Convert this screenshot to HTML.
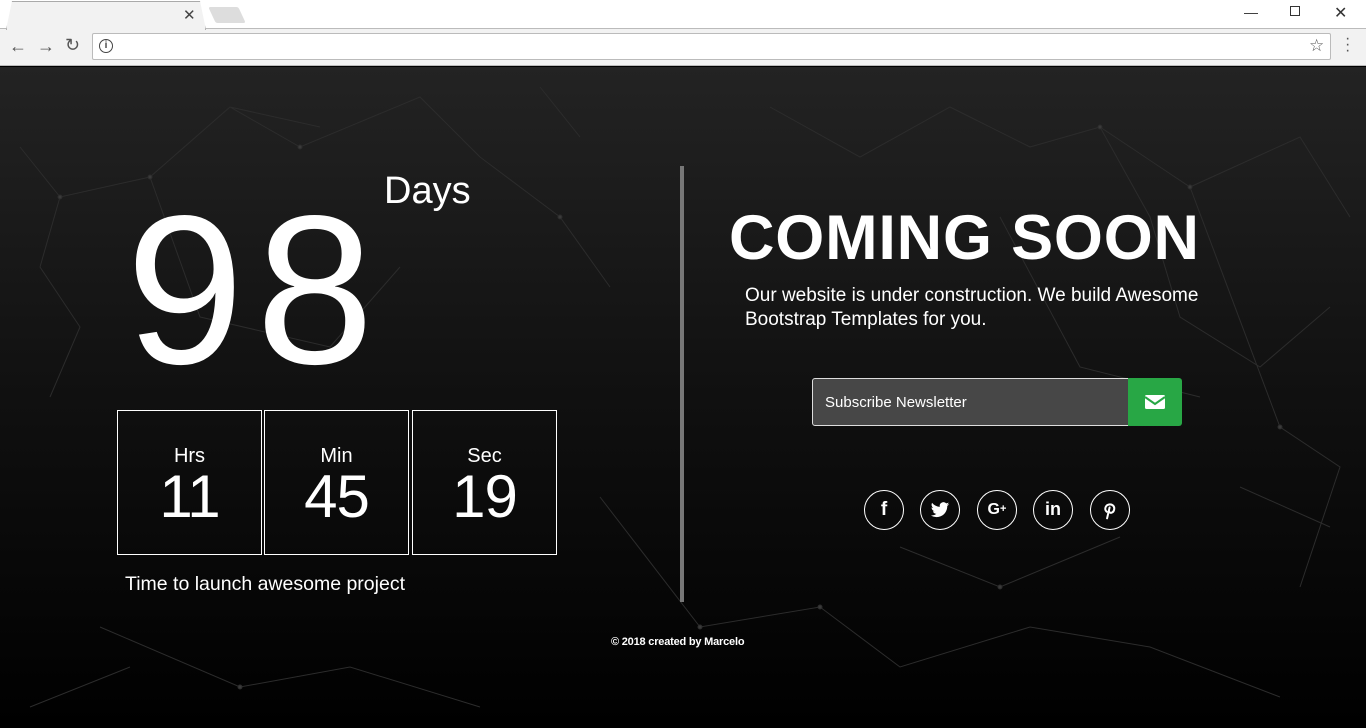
<!DOCTYPE html>
<html><head><meta charset="utf-8"><style>
*{margin:0;padding:0;box-sizing:border-box}
body{width:1366px;height:728px;overflow:hidden;font-family:"Liberation Sans",sans-serif;background:#000;position:relative}
.chrome{position:absolute;left:0;top:0;width:1366px;height:66px;background:#f2f2f2;border-bottom:1px solid #bbb}
.tabbar{position:absolute;top:0;left:0;width:1366px;height:29px;background:#fff;border-bottom:1px solid #bbb}
.tab{position:absolute;left:6px;top:1px;width:200px;height:29px;background:#f2f2f2;border:1px solid #aaa;border-bottom:none;clip-path:polygon(3% 0,97% 0,100% 100%,0 100%);}
.url{position:absolute;left:92px;top:33px;width:1239px;height:27px;background:#fff;border:1px solid #bbb;border-radius:2px}
.page{position:absolute;left:0;top:67px;width:1366px;height:661px;background:linear-gradient(#232323,#101010 50%,#000)}
.w{color:#fff;position:absolute;white-space:nowrap}
.box{position:absolute;top:410px;width:145px;height:145px;border:1px solid #fff;color:#fff;text-align:center}
.box .l{font-size:20px;margin-top:34px;line-height:22px}
.box .n{font-size:60px;line-height:60px;letter-spacing:-1px}
.soc{position:absolute;top:490px;width:40px;height:40px;border:1.5px solid #fff;border-radius:50%;color:#fff;font-weight:bold;font-size:19px;text-align:center;line-height:37px}
.soc svg{position:absolute;left:9px;top:9px}
</style></head><body>
<div class="chrome">
<div class="tabbar"></div>
<div class="tab"></div>
<div style="position:absolute;left:183px;top:6px;font-size:15px;color:#444">✕</div>
<div style="position:absolute;left:212px;top:7px;width:30px;height:16px;background:#ddd;transform:skewX(25deg);border-radius:2px"></div>
<div style="position:absolute;left:1244px;top:4px;font-size:14px;color:#333">—</div>
<div style="position:absolute;left:1290px;top:6px;width:10px;height:10px;border:1px solid #333"></div>
<div style="position:absolute;left:1334px;top:3px;font-size:16px;color:#333">✕</div>
<div style="position:absolute;left:9px;top:36px;font-size:18px;color:#555">←</div>
<div style="position:absolute;left:37px;top:36px;font-size:18px;color:#555">→</div>
<div style="position:absolute;left:65px;top:35px;font-size:18px;color:#555">↻</div>
<div class="url"></div>
<div style="position:absolute;left:99px;top:39px;width:14px;height:14px;border:1.5px solid #444;border-radius:50%;font-size:10px;text-align:center;line-height:11px;color:#444;font-weight:bold">i</div>
<div style="position:absolute;left:1309px;top:36px;font-size:17px;color:#555">☆</div>
<div style="position:absolute;left:1345px;top:36px;font-size:16px;color:#555;line-height:6px">·<br>·<br>·</div>
</div>
<div class="page">
<svg width="1366" height="661" style="position:absolute;left:0;top:0" stroke="#2c2c2c" stroke-width="1" fill="#3a3a3a">
<path d="M20 80L60 130L40 200L80 260L50 330M60 130L150 110L230 40L300 80L420 30L480 90M480 90L560 150L610 220M770 40L860 90L950 40L1030 80L1100 60L1190 120L1300 70L1350 150M1100 60L1150 150L1180 250L1260 300L1330 240M1190 120L1280 360L1340 400L1300 520M900 480L1000 520L1120 470M600 430L700 560L820 540L900 600L1030 560L1150 580L1280 630M100 560L240 620L350 600L480 640M30 640L130 600M230 40L320 60M540 20L580 70M150 110L200 250L330 280L400 200M1000 150L1080 300L1200 330M1240 420L1330 460" fill="none"/>
<circle cx="60" cy="130" r="2"/><circle cx="150" cy="110" r="2"/><circle cx="300" cy="80" r="2"/><circle cx="560" cy="150" r="2"/><circle cx="1100" cy="60" r="2"/><circle cx="1190" cy="120" r="2"/><circle cx="1280" cy="360" r="2"/><circle cx="700" cy="560" r="2"/><circle cx="1000" cy="520" r="2"/><circle cx="240" cy="620" r="2"/><circle cx="820" cy="540" r="2"/>
</svg>
</div>
<div class="w" style="left:126px;top:184px;font-size:212px;line-height:212px;letter-spacing:12px">98</div>
<div class="w" style="left:384px;top:170px;font-size:38px;line-height:42px">Days</div>
<div class="box" style="left:117px"><div class="l">Hrs</div><div class="n">11</div></div>
<div class="box" style="left:264px"><div class="l">Min</div><div class="n">45</div></div>
<div class="box" style="left:412px"><div class="l">Sec</div><div class="n">19</div></div>
<div class="w" style="left:125px;top:573px;font-size:19.5px">Time to launch awesome project</div>
<div style="position:absolute;left:680px;top:166px;width:4px;height:436px;background:#777"></div>
<div class="w" style="left:729px;top:203px;font-size:63px;font-weight:bold;letter-spacing:0.8px;line-height:70px">COMING SOON</div>
<div class="w" style="left:745px;top:284px;font-size:19px;line-height:24px">Our website is under construction. We build Awesome<br>Bootstrap Templates for you.</div>
<div style="position:absolute;left:812px;top:378px;width:318px;height:48px;background:#474747;border:1px solid #ddd;border-radius:3px 0 0 3px;color:#fff;font-size:15px;line-height:48px;padding-left:12px">Subscribe Newsletter</div>
<div style="position:absolute;left:1128px;top:378px;width:54px;height:48px;background:#28a745;border-radius:0 3px 3px 0"><svg width="54" height="48"><rect x="17" y="17" width="20" height="14" rx="1.5" fill="#fff"/><path d="M17 19l10 7 10-7" stroke="#28a745" stroke-width="2" fill="none"/></svg></div>
<div class="soc" style="left:864px">f</div>
<div class="soc" style="left:920px"><svg width="20" height="20" viewBox="0 0 24 24"><path fill="#fff" d="M23 5a9 9 0 0 1-2.6.7A4.5 4.5 0 0 0 22.4 3a9 9 0 0 1-2.9 1.1A4.5 4.5 0 0 0 11.8 8.2 12.8 12.8 0 0 1 2.5 3.5a4.5 4.5 0 0 0 1.4 6 4.5 4.5 0 0 1-2-.6 4.5 4.5 0 0 0 3.6 4.5 4.5 4.5 0 0 1-2 .1 4.5 4.5 0 0 0 4.2 3.1A9 9 0 0 1 1 18.5 12.8 12.8 0 0 0 7.9 20.5c8.300 0 12.8-6.9 12.8-12.8v-.6A9 9 0 0 0 23 5z"/></svg></div>
<div class="soc" style="left:977px;font-size:16px">G<span style="font-size:11px;vertical-align:2px">+</span></div>
<div class="soc" style="left:1033px;font-size:18px">in</div>
<div class="soc" style="left:1090px"><svg width="20" height="20" viewBox="0 0 24 24"><path fill="none" stroke="#fff" stroke-width="2.4" stroke-linecap="round" d="M8 14c-2-1.5-2-4-1-6 1.5-3 6-3.5 8.5-1.5 2.5 2 2 7-1 8.5-2 1-3.5 0-3.5-1.5M11.5 9l-3 13"/></svg></div>
<div class="w" style="left:611px;top:636px;font-size:11px;font-weight:bold;letter-spacing:-0.2px">© 2018 created by Marcelo</div>
</body></html>
